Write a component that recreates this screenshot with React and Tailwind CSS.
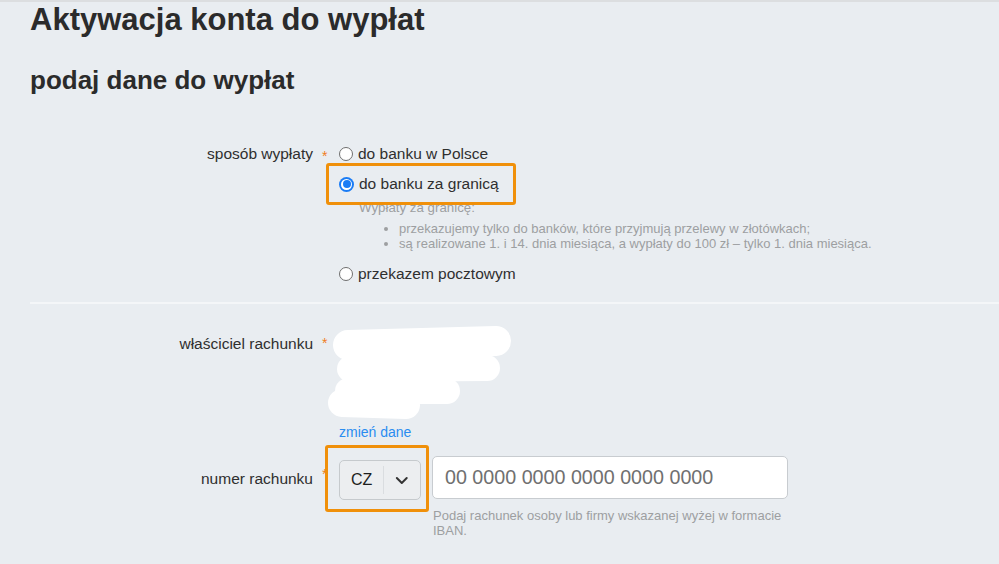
import React from "react";

function Radio({ checked }) {
  if (checked) {
    return (
      <span className="flex h-[15px] w-[15px] shrink-0 items-center justify-center rounded-full bg-[#1a7cf5]">
        <span className="flex h-[11px] w-[11px] items-center justify-center rounded-full bg-white">
          <span className="h-[8px] w-[8px] rounded-full bg-[#1a7cf5]" />
        </span>
      </span>
    );
  }
  return <span className="h-[14px] w-[14px] shrink-0 rounded-full border border-[#6f6f6f] bg-white" />;
}

function Star() {
  return <span className="ml-[9px] text-[14px] leading-none text-[#f07d22]">*</span>;
}

export default function App() {
  return (
    <div className="min-h-screen border-t-2 border-[#dcdee0] bg-[#e9edf1] font-['Liberation_Sans',Arial,sans-serif] text-[#2f2f2f]">
      {/* ===== headings ===== */}
      <h1 className="px-[30px] text-[31px] font-bold leading-[36px] text-[#2b2b2b]">
        Aktywacja konta do wypłat
      </h1>
      <h2 className="mt-[27px] px-[30px] text-[26px] font-bold leading-[31px] text-[#2b2b2b]">
        podaj dane do wypłat
      </h2>

      {/* ===== sposób wypłaty ===== */}
      <div className="mt-[48px] flex">
        <div className="w-[313px] text-right text-[15.5px] leading-[20px]">sposób wypłaty</div>
        <div className="w-[26px]">
          <Star />
        </div>
        <div className="flex flex-col">
          <label className="flex h-[20px] items-center gap-[5px] text-[15.5px]">
            <Radio />
            do banku w Polsce
          </label>
          <div className="relative mt-[10px] w-fit">
            <label className="flex h-[20px] items-center gap-[5px] text-[15.5px]">
              <Radio checked />
              do banku za granicą
            </label>
            <div className="absolute -top-[11px] -left-[13px] -right-[17px] -bottom-[11px] rounded-[3px] border-[3px] border-[#f0900a]" />
          </div>
          <div className="ml-[20px] mt-[5px] text-[13.3px] leading-[17px] text-[#9d9fa1]">
            Wypłaty za granicę:
            <ul className="mt-[5px] list-disc pl-[40px] text-[13px] leading-[15px]">
              <li>przekazujemy tylko do banków, które przyjmują przelewy w złotówkach;</li>
              <li>są realizowane 1. i 14. dnia miesiąca, a wypłaty do 100 zł – tylko 1. dnia miesiąca.</li>
            </ul>
          </div>
          <label className="mt-[13px] flex h-[20px] items-center gap-[5px] text-[15.5px]">
            <Radio />
            przekazem pocztowym
          </label>
        </div>
      </div>

      <div className="ml-[30px] mt-[18px] h-[2px] bg-[#f4f6f8]" />

      {/* ===== właściciel rachunku ===== */}
      <div className="mt-[22px] flex">
        <div className="w-[313px] pt-[8px] text-right text-[15.5px] leading-[20px]">właściciel rachunku</div>
        <div className="w-[13px] pt-[5px]">
          <Star />
        </div>
        <div className="flex flex-col">
          <svg width="190" height="96" viewBox="0 0 190 96" className="-mt-[1px]">
            <path d="M22 20 L170 16" stroke="#fff" strokeWidth="30" strokeLinecap="round" />
            <path d="M24 44 L161 43" stroke="#fff" strokeWidth="26" strokeLinecap="round" />
            <path d="M22 66 L121 66" stroke="#fff" strokeWidth="26" strokeLinecap="round" />
            <path d="M16 78 L80 80" stroke="#fff" strokeWidth="28" strokeLinecap="round" />
          </svg>
          <a className="ml-[13px] mt-[2px] text-[14px] leading-[18px] text-[#2a8cf0]">zmień dane</a>
        </div>
      </div>

      {/* ===== numer rachunku ===== */}
      <div className="mt-[15px] flex">
        <div className="w-[313px] pt-[13px] text-right text-[15.5px] leading-[20px]">numer rachunku</div>
        <div className="w-[26px] pt-[6px]">
          <Star />
        </div>
        <div className="relative mt-[4px] h-[40px] w-[82px] self-start">
          <div className="flex h-full items-center rounded-[5px] border border-[#c6cacd] bg-[#eceef0]">
            <span className="w-[44px] text-center text-[16px] text-[#1e1e1e]">CZ</span>
            <span className="h-[28px] w-px bg-[#dadde0]" />
            <svg width="36" height="14" viewBox="0 0 36 14">
              <path d="M13 5 L18 10 L23 5" fill="none" stroke="#333" strokeWidth="2" strokeLinecap="round" strokeLinejoin="round" />
            </svg>
          </div>
          <div className="absolute -top-[15px] -left-[14px] -right-[8px] -bottom-[12px] rounded-[3px] border-[3px] border-[#f0900a]" />
        </div>
        <div className="ml-[11px] flex w-[356px] flex-col">
          <div className="flex h-[43px] items-center rounded-[5px] border border-[#c8ccd0] bg-white px-[12px] text-[19.7px] text-[#707070]">
            00 0000 0000 0000 0000 0000
          </div>
          <p className="mt-[9px] pl-[1px] text-[13px] leading-[15px] text-[#9d9fa1]">
            Podaj rachunek osoby lub firmy wskazanej wyżej w formacie IBAN.
          </p>
        </div>
      </div>
    </div>
  );
}
